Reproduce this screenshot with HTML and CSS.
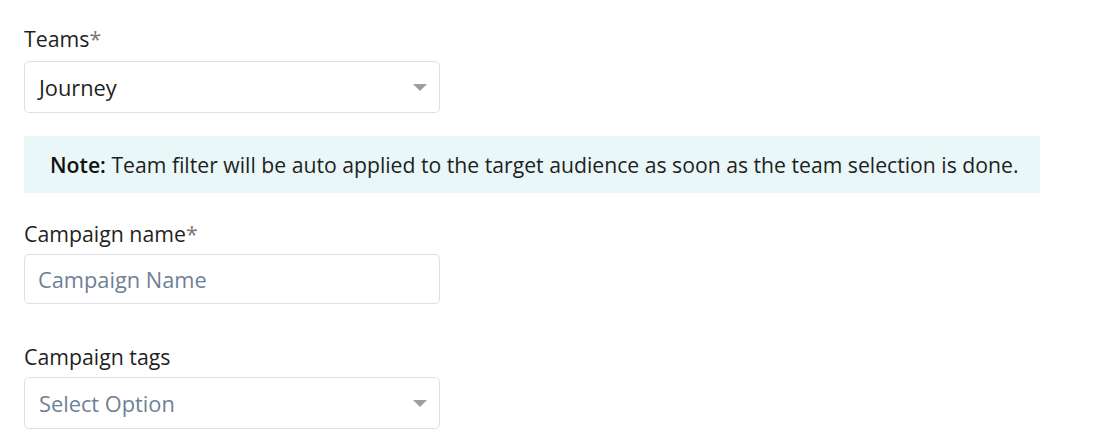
FILE: index.html
```html
<!DOCTYPE html>
<html lang="en">
<head>
    <meta charset="UTF-8">
    <meta name="viewport" content="width=device-width, initial-scale=1.0">
    <title>Campaign</title>
    <link rel="stylesheet" href="styles.css">
</head>
<body>
    <div class="form">
        <div class="form-group">
            <label class="label">Teams<span class="req">*</span></label>
            <div class="select">
                <span class="value">Journey</span>
                <span class="caret"></span>
            </div>
        </div>

        <div class="note"><b>Note:</b> Team filter will be auto applied to the target audience as soon as the team selection is done.</div>

        <div class="form-group">
            <label class="label" for="campaign-name">Campaign name<span class="req">*</span></label>
            <input type="text" id="campaign-name" class="input" placeholder="Campaign Name">
        </div>

        <div class="form-group tags">
            <label class="label">Campaign tags</label>
            <div class="select">
                <span class="value placeholder">Select Option</span>
                <span class="caret"></span>
            </div>
        </div>
    </div>
</body>
</html>
```

FILE: styles.css
```css
body {
    margin: 0;
    background-color: #fff;
    font-family: "Open Sans", "Liberation Sans", sans-serif;
    color: #1f1f1f;
}
.form {
    padding: 27px 24px 0 24px;
    width: 1016px;
}
.form-group {
    margin-bottom: 23px;
}
.form-group.tags {
    margin-top: 41px;
}
.label {
    display: block;
    font-size: 21.3px;
    line-height: 24px;
    margin-bottom: 8px;
}
.form-group:first-child .label {
    margin-bottom: 10px;
}
.req {
    color: #777;
}
.select,
.input {
    box-sizing: border-box;
    width: 416px;
    height: 52px;
    border: 1px solid #dcdfe8;
    border-radius: 5px;
    background-color: #fff;
}
.select {
    display: flex;
    align-items: center;
    justify-content: space-between;
    padding: 0 12px 0 14px;
}
.value {
    font-size: 21.8px;
}
.placeholder {
    color: #6f7f98;
}
.caret {
    width: 0;
    height: 0;
    border-left: 7px solid transparent;
    border-right: 7px solid transparent;
    border-top: 7px solid #9e9e9e;
}
.input {
    display: block;
    height: 50px;
    padding: 0 13px;
    font-family: inherit;
    font-size: 21.8px;
    color: #1f1f1f;
    outline: none;
}
.input::placeholder {
    color: #6f7f98;
}
.note {
    box-sizing: border-box;
    height: 57px;
    background-color: #e9f7f8;
    padding: 0 26px;
    display: flex;
    align-items: center;
    font-size: 21.2px;
    margin-bottom: 29px;
    white-space: pre;
}
.note b {
    font-weight: 600;
    color: #111;
}
```
